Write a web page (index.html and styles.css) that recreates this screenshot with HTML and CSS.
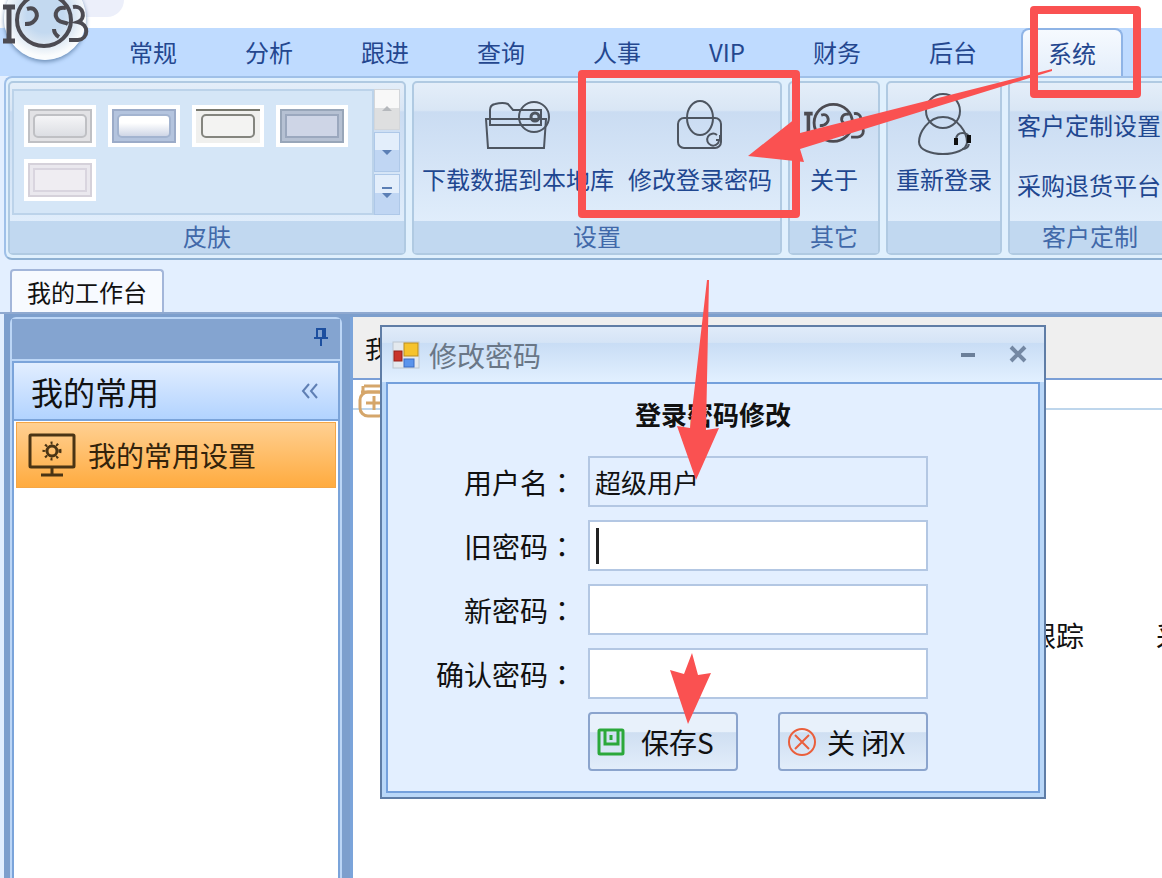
FILE: index.html
```html
<!DOCTYPE html>
<html lang="zh-CN">
<head>
  <meta charset="UTF-8">
  <title>修改密码</title>
  <link rel="stylesheet" href="styles.css">
</head>
<body>

  <svg class="defs" aria-hidden="true">
    <symbol id="logo" viewBox="0 0 90 50">
      <g fill="none" stroke="#4c4b52" stroke-width="4">
        <path d="M3 9h12M3 43h12M9 9v34" stroke-width="5"/>
        <ellipse cx="44" cy="22" rx="27" ry="26"/>
        <path d="M27 11c9-3 12 6 8 11c-3 4-6 4-10 4"/>
        <path d="M66 10c-9-2-13 6-8 12c3 3 7 2 10 4"/>
        <path d="M73 9c11-2 13 12 5 15c11 2 11 17 0 18h-9"/>
        <path d="M54 31q0 5 5 8"/>
      </g>
    </symbol>
  </svg>

  <div class="app">
    <header class="titlebar">
      <div class="quick"></div>
    </header>
    <div class="orb">
      <svg width="90" height="50"><use href="#logo"/></svg>
    </div>

    <nav class="menu">
      <a href="#">常规</a>
      <a href="#">分析</a>
      <a href="#">跟进</a>
      <a href="#">查询</a>
      <a href="#">人事</a>
      <a href="#">VIP</a>
      <a href="#">财务</a>
      <a href="#">后台</a>
      <a href="#" class="activo">系统</a>
    </nav>

    <section class="ribbon">
      <div class="group">
        <div class="gallery">
          <div class="skins">
            <button class="skin silver" aria-label="皮肤1"><span></span></button>
            <button class="skin blue" aria-label="皮肤2"><span></span></button>
            <button class="skin dark" aria-label="皮肤3"><span></span></button>
            <button class="skin flat" aria-label="皮肤4"><span></span></button>
            <button class="skin light" aria-label="皮肤5"><span></span></button>
          </div>
          <div class="scroll">
            <button class="off" aria-label="上"><svg width="12" height="12"><path d="M1 8l5-5 5 5z" fill="#b5b8bc"/></svg></button>
            <button aria-label="下"><svg width="12" height="12"><path d="M1 4l5 5 5-5z" fill="#5b7fb5"/></svg></button>
            <button aria-label="更多"><svg width="12" height="14"><path d="M1 1h10v2H1zM1 7l5 5 5-5z" fill="#5b7fb5"/></svg></button>
          </div>
        </div>
        <div class="group-name">皮肤</div>
      </div>

      <div class="group">
        <div class="tools">
          <button class="tool">
            <svg width="68" height="56" viewBox="0 0 68 56" fill="none" stroke="#4d5560" stroke-width="2">
              <path d="M6 28V13q0-5 5-6q8-2 13 0l5 6h28v15z"/>
              <path d="M1 22h62M2 22l2 29h56l2-29"/>
              <circle cx="50" cy="20" r="15"/>
              <circle cx="51" cy="20" r="4" stroke-width="3"/>
            </svg>
            下载数据到本地库
          </button>
          <button class="tool">
            <svg width="48" height="56" viewBox="0 0 48 56" fill="none" stroke="#4d5560" stroke-width="2">
              <rect x="2" y="21" width="43" height="30" rx="6"/>
              <ellipse cx="24" cy="21" rx="13" ry="17"/>
              <path d="M41 38a6 6 0 1 0 2 6M44 38v5h-4"/>
            </svg>
            修改登录密码
          </button>
        </div>
        <div class="group-name">设置</div>
      </div>

      <div class="group">
        <div class="tools">
          <button class="tool about">
            <svg width="64" height="56"><use href="#logo"/></svg>
            关于
          </button>
        </div>
        <div class="group-name">其它</div>
      </div>

      <div class="group">
        <div class="tools">
          <button class="tool">
            <svg class="tall" width="60" height="66" viewBox="0 0 60 66" fill="none" stroke="#4d5560" stroke-width="2">
              <circle cx="29" cy="20" r="17"/>
              <path d="M29 26c-15 0-24 16-24 25c0 16 48 16 48 0c0-9-9-25-24-25z"/>
              <path d="M42 48c1-8 12-8 14 0M55 53q-1 5-7 5" stroke-width="2"/>
              <path d="M42 47v7M55 44v8" stroke="#111" stroke-width="4"/>
            </svg>
            重新登录
          </button>
        </div>
        <div class="group-name"></div>
      </div>

      <div class="group">
        <div class="links">
          <a href="#">客户定制设置</a>
          <a href="#">采购退货平台</a>
        </div>
        <div class="group-name">客户定制</div>
      </div>
    </section>

    <div class="doc-tabs">
      <a href="#" class="doc-tab">我的工作台</a>
    </div>

    <main class="workspace">
      <aside class="sidebar">
        <div class="side-top">
          <button aria-label="固定">
            <svg width="16" height="20" viewBox="0 0 16 20" fill="none" stroke="#1d4f9f" stroke-width="2"><path d="M4 11V2h8v9M10 2v9M1 11h14M8 11v8"/></svg>
          </button>
        </div>
        <div class="side-title">
          <h2>我的常用</h2>
          <svg width="18" height="16" viewBox="0 0 18 16" fill="none" stroke="#5f7fb4" stroke-width="2"><path d="M8 1L2 8l6 7M16 1l-6 7 6 7"/></svg>
        </div>
        <a href="#" class="side-item">
          <svg width="48" height="44" viewBox="0 0 48 44" fill="none" stroke="#4a3414" stroke-width="3">
            <rect x="2" y="2" width="44" height="32" rx="1"/>
            <path d="M24 34v8M13 42h22"/>
            <circle cx="24" cy="18" r="5"/>
            <circle cx="24" cy="18" r="8" stroke-dasharray="2 4"/>
          </svg>
          我的常用设置
        </a>
      </aside>

      <section class="content">
        <div class="content-head">我</div>
        <div class="content-bar">
          <svg width="30" height="34" viewBox="0 0 30 34" fill="none" stroke="#d5a66a" stroke-width="3">
            <path d="M6 2h22M3 8h26M5 2v6"/>
            <rect x="2" y="8" width="27" height="24" rx="8"/>
            <path d="M8 19h16M16 12v14"/>
          </svg>
        </div>
        <div class="flow">
          <span>跟踪</span>
          <span>采</span>
        </div>
      </section>
    </main>

    <form class="dialog">
      <div class="dialog-title">
        <svg width="28" height="28" viewBox="0 0 28 28">
          <rect x="1" y="1" width="26" height="26" fill="#e4e9ee" stroke="#bcc6d0"/>
          <rect x="12" y="2" width="14" height="13" fill="#f6c32c" stroke="#b98d20"/>
          <rect x="2" y="10" width="8" height="10" fill="#c9342b" stroke="#94221c"/>
          <rect x="12" y="18" width="10" height="8" fill="#5a94ec" stroke="#3a6cc4"/>
        </svg>
        <span>修改密码</span>
        <button type="button" aria-label="最小化"><svg width="20" height="20"><path d="M3 10h14" stroke="#6b7f99" stroke-width="4"/></svg></button>
        <button type="button" aria-label="关闭"><svg width="20" height="20"><path d="M3 2l14 14M17 2L3 16" stroke="#7488a3" stroke-width="4"/></svg></button>
      </div>

      <div class="dialog-body">
        <h1>登录密码修改</h1>
        <div class="fields">
          <label for="usuario">用户名<i lang="zh-TW">：</i></label>
          <input type="text" id="usuario" value="超级用户" readonly>

          <label for="clave">旧密码<i lang="zh-TW">：</i></label>
          <input type="password" id="clave" class="cursor">

          <label for="nueva">新密码<i lang="zh-TW">：</i></label>
          <input type="password" id="nueva">

          <label for="confirmar">确认密码<i lang="zh-TW">：</i></label>
          <input type="password" id="confirmar">

          <div class="acciones">
            <button type="button" class="btn">
              <svg width="28" height="28" viewBox="0 0 28 28" fill="none" stroke="#2ba83a" stroke-width="3">
                <rect x="2" y="2" width="24" height="24" rx="1"/>
                <path d="M8 2v14h13V2M14 7v5"/>
              </svg>
              <span class="save">保存S</span>
            </button>
            <button type="button" class="btn">
              <svg width="30" height="30" viewBox="0 0 30 30" fill="none" stroke="#ea5f3c" stroke-width="2">
                <circle cx="15" cy="15" r="13"/>
                <path d="M8 8l14 14M22 8L8 22"/>
              </svg>
              <span>关 闭X</span>
            </button>
          </div>
        </div>
      </div>
    </form>

    <svg class="marks" width="1162" height="878" aria-hidden="true">
      <g fill="none" stroke="#fa5151" stroke-width="8" stroke-linejoin="round">
        <rect x="582" y="74" width="214" height="140"/>
        <rect x="1034" y="10" width="103" height="84"/>
      </g>
      <g fill="#fa5151">
        <path d="M1052 69L800 133L796 118L748 156L804 162L800 149L1052 71z"/>
        <path d="M707 280L690 428L677 426L696 480L719 428L706 430L709 280z"/>
        <path d="M692 653L684 674L670 670L688 724L711 673L698 675z"/>
      </g>
    </svg>
  </div>

</body>
</html>
```

FILE: styles.css
```css
* {
  box-sizing: border-box;
}

body {
  font-family: "Noto Sans CJK SC", sans-serif;
  margin: 0;
  background: #fff;
  color: #111;
}

button {
  font-family: inherit;
  border: none;
  background: none;
  padding: 0;
  cursor: pointer;
}

a {
  color: inherit;
  text-decoration: none;
}

svg {
  flex: none;
}

.defs {
  position: absolute;
  width: 0;
  height: 0;
}

.app {
  position: relative;
  display: flex;
  flex-direction: column;
  height: 100vh;
  overflow: hidden;
  background: #e3efff;
}

/* barra superior */
.titlebar {
  flex: none;
  height: 28px;
  padding-left: 60px;
  background: #fff;
}

.quick {
  width: 64px;
  height: 17px;
  border-radius: 0 0 20px 0;
  background: #eceffa;
}

.orb {
  position: absolute;
  top: -23px;
  left: 4px;
  width: 82px;
  height: 83px;
  border-radius: 50%;
  background: radial-gradient(circle at 50% 45%, #c3d9f0 30%, #dde8f3 50%, #fafcfd 68%);
  box-shadow: 0 2px 4px #6c8db5;
}

.orb svg {
  position: absolute;
  top: 21px;
  left: -4px;
}

.menu {
  flex: none;
  display: flex;
  height: 48px;
  padding-left: 95px;
  background: #bfdbff;
  color: #24478f;
  font-size: 24px;
  line-height: 48px;
  white-space: nowrap;
}

.menu a {
  padding: 0 34px;
}

.menu .activo {
  margin-left: 10px;
  padding: 0 25px;
  border: 2px solid #8fb4e6;
  border-bottom: none;
  border-radius: 8px 8px 0 0;
  background: linear-gradient(#f6faff, #e4eefa);
  line-height: 46px;
}

/* ribbon */
.ribbon {
  flex: none;
  display: flex;
  gap: 6px;
  height: 184px;
  margin-left: 4px;
  padding: 3px 0 3px 2px;
  border: 2px solid #9fc0e8;
  border-right: none;
  border-bottom-color: #8fb1d3;
  border-radius: 8px 0 0 8px;
  background: #e0f0fd;
}

.group {
  flex: none;
  display: flex;
  flex-direction: column;
  border: 2px solid #b0cae2;
  border-radius: 5px;
  background: linear-gradient(#e4eef9, #d9e6f5 16%, #cadcf2 17%, #e0edfb 82%);
  color: #1f4790;
  font-size: 24px;
  white-space: nowrap;
}

.group-name {
  flex: none;
  height: 32px;
  background: #c1d8f0;
  color: #4169a9;
  line-height: 30px;
  text-align: center;
}

.gallery {
  flex: 1;
  display: flex;
  width: 394px;
  min-height: 0;
  padding: 6px 4px 6px 2px;
}

.skins {
  flex: 1;
  display: grid;
  grid-template-columns: repeat(4, 72px);
  grid-auto-rows: 42px;
  gap: 12px;
  padding: 14px 10px 0;
  border: 2px solid #bcd3ea;
  background: #d5e6f7;
}

.skin {
  display: flex;
  padding: 5px;
  border: 4px solid #fff;
  background: #e2e2e5;
  outline: 2px solid #bfc0c4;
  outline-offset: -6px;
}

.skin span {
  flex: 1;
  border: 2px solid #bfc0c4;
  border-radius: 5px;
  background: linear-gradient(#f5f5f7, #dcdee3);
}

.skin.blue {
  background: #b4c4de;
  outline-color: #9babc8;
}

.skin.blue span {
  border-color: #a3b4d0;
  background: linear-gradient(#fff 35%, #cfd6e6);
}

.skin.dark {
  background: linear-gradient(#77786f 2px, #f0f0ee 2px);
  outline: none;
}

.skin.dark span {
  border-color: #84857f;
  background: #f3f3f2;
}

.skin.flat {
  background: #b6c1d3;
  outline-color: #98a6b9;
}

.skin.flat span {
  border-color: #9ba8be;
  border-radius: 0;
  background: #ced5e6;
}

.skin.light {
  background: #eae8ee;
  outline-color: #d5d1da;
}

.skin.light span {
  border-color: #d9d5df;
  border-radius: 0;
  background: #efedf2;
}

.scroll {
  display: flex;
  flex-direction: column;
  width: 26px;
  gap: 2px;
}

.scroll button {
  flex: 1;
  border: 1px solid #aec8e8;
  background: linear-gradient(#e3eefb 45%, #c0d6f3 46%);
}

.scroll .off {
  border-color: #d3d6da;
  background: linear-gradient(#f8f8f8 45%, #dedfe0 46%);
}

.tools {
  flex: 1;
  display: flex;
  gap: 14px;
  min-height: 0;
  padding: 0 8px;
}

.tool {
  display: flex;
  flex-direction: column;
  align-items: center;
  gap: 8px;
  padding-top: 14px;
  color: inherit;
  font-size: 24px;
  line-height: 36px;
}

.tool .tall {
  margin-top: -6px;
  margin-bottom: -4px;
}

.about {
  width: 72px;
}

.links {
  flex: 1;
  display: flex;
  flex-direction: column;
  width: 160px;
  min-height: 0;
  padding: 12px 7px 0;
  line-height: 60px;
}

/* pestañas de documentos */
.doc-tabs {
  flex: none;
  display: flex;
  align-items: flex-end;
  height: 54px;
  padding-left: 10px;
  border-bottom: 2px solid #8fa9d0;
}

.doc-tab {
  height: 43px;
  padding: 0 15px;
  border: 2px solid #a3b6da;
  border-bottom: none;
  border-radius: 4px 4px 0 0;
  background: #f7faff;
  font-size: 24px;
  line-height: 42px;
}

.workspace {
  flex: 1;
  display: flex;
  gap: 8px;
  min-height: 0;
  padding-top: 3px;
  padding-left: 6px;
  border-left: 4px solid #e3efff;
  background: #7d9fcd;
}

.sidebar {
  width: 332px;
  border: 2px solid #bcd6f6;
  border-bottom: none;
  border-radius: 6px 6px 0 0;
  background: #fff;
  box-shadow: inset 2px 0 #7ba4da, inset -2px 0 #7ba4da;
}

.side-top {
  display: flex;
  justify-content: flex-end;
  align-items: center;
  height: 42px;
  padding-right: 11px;
  border-bottom: 2px solid #bcd6f6;
  background: #84a4d0;
}

.side-title {
  display: flex;
  justify-content: space-between;
  align-items: center;
  height: 60px;
  padding: 0 19px 0 17px;
  border: 2px solid #7ba4da;
  background: linear-gradient(#e2eeff, #b2d3ff);
}

.side-title h2 {
  margin: 0;
  font-size: 32px;
  font-weight: normal;
  line-height: 48px;
}

.side-item {
  display: flex;
  align-items: center;
  gap: 12px;
  height: 66px;
  margin: 1px 4px;
  padding-left: 11px;
  border: 1px solid #f5a646;
  background: linear-gradient(#ffd092, #ffab3f);
  color: #33230b;
  font-size: 28px;
}

.content {
  flex: 1;
  min-width: 0;
  border-left: 3px solid #7ba4da;
  background: #fff;
}

.content-head {
  height: 63px;
  padding-left: 12px;
  border-bottom: 2px solid #7b9fd6;
  background: #efefef;
  font-size: 24px;
  line-height: 62px;
}

.content-bar {
  height: 30px;
  padding: 4px 5px;
  border-bottom: 2px solid #bed6ec;
}

.flow {
  display: flex;
  gap: 72px;
  overflow: hidden;
  padding-top: 203px;
  padding-left: 675px;
  font-size: 28px;
  line-height: 44px;
  white-space: nowrap;
}

/* ventana */
.dialog {
  position: absolute;
  top: 325px;
  left: 380px;
  width: 666px;
  padding: 0 4px 4px;
  border: 2px solid #5f7da6;
  background: #b9d7f8;
}

.dialog-title {
  display: flex;
  align-items: center;
  height: 55px;
  margin: 0 -4px;
  padding: 0 16px 0 10px;
  background: linear-gradient(#e0ebf9, #d5e4f6 28%, #c9ddf5 30%, #e2f0ff);
  color: #6a7787;
  font-size: 28px;
}

.dialog-title span {
  flex: 1;
  padding-left: 9px;
}

.dialog-title button {
  display: flex;
  margin-left: 30px;
}

.dialog-body {
  padding-bottom: 20px;
  border: 2px solid #74a0dc;
  background: #e3efff;
}

.dialog h1 {
  margin: 0 0 12px;
  font-size: 26px;
  line-height: 60px;
  text-align: center;
}

.fields {
  display: grid;
  grid-template-columns: 188px 340px;
  gap: 13px 12px;
  align-items: center;
  font-size: 28px;
}

.fields label {
  text-align: right;
}

.fields i {
  font-family: "Noto Sans CJK TC", sans-serif;
  font-style: normal;
}

.fields input {
  width: 100%;
  height: 51px;
  padding: 0 5px;
  border: 2px solid #b3c7e3;
  background: #fff;
  color: #111;
  font-family: inherit;
  font-size: 26px;
  outline: none;
}

.fields input:read-only {
  background: #e3efff;
}

.fields .cursor {
  background: linear-gradient(#222, #222) no-repeat 6px center / 3px 36px, #fff;
}

.acciones {
  grid-column: 2;
  display: flex;
  justify-content: space-between;
}

.btn {
  display: flex;
  align-items: center;
  gap: 10px;
  width: 150px;
  height: 59px;
  padding-left: 7px;
  border: 2px solid #8ba4cd;
  border-radius: 4px;
  background: linear-gradient(#e8f1fb 32%, #cfdff2 34%, #e2edfa);
  color: #111;
  font-size: 28px;
}

.save {
  padding-left: 6px;
}

/* flechas y recuadros */
.marks {
  position: absolute;
  top: 0;
  left: 0;
  pointer-events: none;
}
```
